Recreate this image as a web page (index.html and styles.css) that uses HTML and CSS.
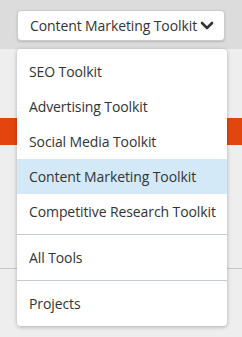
FILE: index.html
```html
<!DOCTYPE html>
<html>
  <head>
    <meta charset="utf-8" />
    <meta name="viewport" content="width=device-width, initial-scale=1" />
    <title>toolkit switcher</title>
    <link rel="stylesheet" href="styles.css">
  </head>
  <body>
    <div class="topbar">
      <button class="switcher" type="button">
        <span>Content Marketing Toolkit</span>
        <svg class="chevron" width="14" height="9" viewBox="0 0 14 9">
          <polyline points="2,2 7,7 12,2" fill="none" stroke="#333" stroke-width="2.6" stroke-linecap="round" stroke-linejoin="round" />
        </svg>
      </button>
    </div>
    <div class="page">
      <div class="band"></div>
      <div class="rule"></div>
    </div>

    <!-- the open menu sits over the page -->
    <div class="menu">
      <ul class="section">
        <li>SEO Toolkit</li>
        <li>Advertising Toolkit</li>
        <li>Social Media Toolkit</li>
        <li class="active">Content Marketing Toolkit</li>
        <li>Competitive Research Toolkit</li>
      </ul>
      <ul class="section">
        <li>All Tools</li>
      </ul>
      <ul class="section">
        <li>Projects</li>
      </ul>
    </div>
  </body>
</html>
```

FILE: styles.css
```css
body {
  margin: 0;
  background: #eeeeee;
  font-family: "Open Sans", "Noto Sans", sans-serif;
  color: #333333;
  position: relative;
}
.topbar {
  background: #dcdcdc;
  height: 49px;
  padding: 10px 17px 0;
  box-sizing: border-box;
}
.switcher {
  width: 208px;
  height: 31px;
  display: flex;
  align-items: center;
  justify-content: space-between;
  padding: 0 10px 0 12px;
  border: 1px solid #c9cdd0;
  border-radius: 4px;
  background: #fff;
  box-shadow: 0 1px 2px rgba(0, 0, 0, 0.18);
  font-family: inherit;
  font-size: 14px;
  color: #333333;
  letter-spacing: -0.1px;
}
.chevron {
  display: block;
}
.page {
  height: 288px;
  padding-top: 69px;
  box-sizing: border-box;
}
.band {
  height: 27px;
  background: #e2460e;
}
.rule {
  margin-top: 123px;
  height: 1px;
  background: #c5c9cc;
}
.menu {
  position: absolute;
  top: 49px;
  left: 17px;
  width: 210px;
  background: #fff;
  border-radius: 4px;
  box-shadow: 0 1px 4px rgba(0, 0, 0, 0.28);
}
.section {
  list-style: none;
  margin: 0;
  padding: 5px 0;
}
.section + .section {
  border-top: 1px solid #c5ccd1;
}
.section li {
  height: 35px;
  line-height: 35px;
  padding-left: 12px;
  font-size: 14px;
  letter-spacing: -0.1px;
}
.section li.active {
  background: #d3e9f7;
}
```
